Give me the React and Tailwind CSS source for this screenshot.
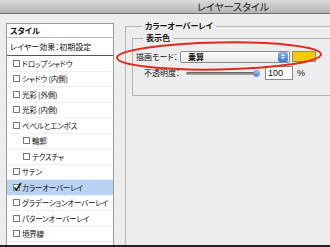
import React from "react";

const items = [
  { label: "ドロップシャドウ", indent: false },
  { label: "シャドウ (内側)", indent: false },
  { label: "光彩 (外側)", indent: false },
  { label: "光彩 (内側)", indent: false },
  { label: "ベベルとエンボス", indent: false },
  { label: "輪郭", indent: true },
  { label: "テクスチャ", indent: true },
  { label: "サテン", indent: false },
  { label: "カラーオーバーレイ", indent: false, checked: true, selected: true },
  { label: "グラデーションオーバーレイ", indent: false },
  { label: "パターンオーバーレイ", indent: false },
  { label: "境界線", indent: false },
];

function Box({ checked }) {
  return (
    <span className="relative w-[7px] h-[7px] border border-[#7a7a7a] bg-white shrink-0 mr-[2px]">
      {checked && (
        <svg className="absolute -left-[1px] -top-[3px]" width="9" height="10" viewBox="0 0 9 10">
          <path d="M1.5 5.5 L3.5 8 L8 1" stroke="#1a1a1a" strokeWidth="1.6" fill="none" />
        </svg>
      )}
    </span>
  );
}

export default function App() {
  return (
    <div
      className="relative w-[330px] h-[247px] overflow-hidden bg-[#ededed] text-[#111] text-[8px] leading-none [font-feature-settings:'palt'] border-b-2 border-[#222]"
      style={{ fontFamily: '"Noto Sans CJK JP", "Noto Sans", sans-serif' }}
    >
      <div className="h-[14px] bg-gradient-to-b from-[#dcdcdc] to-[#b4b4b4] border-b border-[#6e6e6e] flex items-center pl-[197px] text-[10px] leading-[12px] text-[#222] whitespace-nowrap">
        レイヤースタイル
      </div>
      <div className="flex pt-[9px]">
        <div className="ml-[6px] w-[108px] h-[240px] border border-[#9a9a9a] bg-white shrink-0">
          <div className="h-[14px] flex items-center pl-[3px] font-bold border-b border-[#bdbdbd]">スタイル</div>
          <div className="h-[18px] flex items-center pl-[3px] border-b border-[#555] whitespace-nowrap">レイヤー効果：初期設定</div>
          {items.map((it) => (
            <div
              key={it.label}
              className={
                "h-[15.5px] flex items-center border-b border-[#f0f0f0] whitespace-nowrap " +
                (it.indent ? "pl-[16px] " : "pl-[6px] ") +
                (it.selected ? "bg-[#b9d3f5]" : "")
              }
            >
              <Box checked={it.checked} />
              <span className="text-[7.5px] tracking-[-0.2px]">{it.label}</span>
            </div>
          ))}
        </div>
        <fieldset className="ml-[11px] mt-[-1px] w-[230px] h-[260px] border border-[#b4b4b4] shrink-0 pl-[6px]">
          <legend className="ml-[10px] px-[3px] font-bold whitespace-nowrap">カラーオーバーレイ</legend>
          <fieldset className="w-[220px] h-[62px] border border-[#b4b4b4] mt-[4px]">
            <legend className="ml-[10px] px-[3px] font-bold">表示色</legend>
            <div className="flex items-center mt-[8px] h-[13px]">
              <span className="ml-[3px] w-[44px] whitespace-nowrap">描画モード：</span>
              <div className="w-[110px] h-[12px] border border-[#8a8a8a] rounded-[2px] bg-gradient-to-b from-white to-[#e6e6e6] flex items-center justify-between">
                <span className="pl-[7px] font-bold">乗算</span>
                <span className="w-[10px] h-[10px] mr-[1px] rounded-[2px] bg-gradient-to-b from-[#8fb6ef] to-[#3d76d6] flex flex-col items-center justify-center gap-[1px]">
                  <span className="w-0 h-0 border-l-[2px] border-r-[2px] border-b-[2px] border-l-transparent border-r-transparent border-b-white" />
                  <span className="w-0 h-0 border-l-[2px] border-r-[2px] border-t-[2px] border-l-transparent border-r-transparent border-t-white" />
                </span>
              </div>
              <span className="ml-[2px] w-[24px] h-[11px] border border-[#8a8a8a] bg-[#f7c900]" />
            </div>
            <div className="flex items-center mt-[3px] h-[14px]">
              <span className="ml-[11px] w-[42px] whitespace-nowrap">不透明度：</span>
              <div className="relative w-[72px] h-[3px] bg-gradient-to-b from-[#5e5e5e] to-[#b5b5b5] rounded-full">
                <span className="absolute right-[-2px] top-[-2px] w-[7px] h-[7px] rounded-full bg-gradient-to-b from-[#a8c8f2] to-[#4a7dc8] border border-[#6a8cc0]" />
              </div>
              <span className="ml-[7px] w-[28px] h-[14px] border border-[#8a8a8a] bg-white flex items-center pl-[2px] text-[9px]" style={{ fontFamily: '"Liberation Sans", sans-serif' }}>100</span>
              <span className="ml-[4px] text-[9px]" style={{ fontFamily: '"Liberation Sans", sans-serif' }}>%</span>
            </div>
          </fieldset>
        </fieldset>
      </div>
      <svg className="absolute left-0 top-0 pointer-events-none" width="330" height="247">
        <ellipse cx="219" cy="56" rx="102" ry="13.5" fill="none" stroke="#e02a1c" strokeWidth="2" transform="rotate(-1 219 56)" />
      </svg>
    </div>
  );
}
